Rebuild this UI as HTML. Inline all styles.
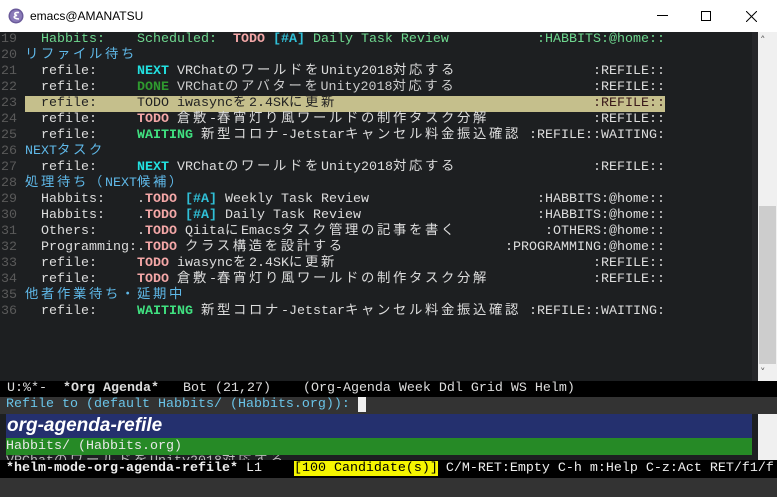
<!DOCTYPE html>
<html><head><meta charset="utf-8"><style>
*{margin:0;padding:0;box-sizing:border-box}
body{width:777px;height:497px;overflow:hidden;background:#1d1f21;font-family:"Liberation Mono","Noto Sans CJK JP",monospace;font-size:13.33px;position:relative}
.title{position:absolute;left:0;top:0;width:777px;height:32px;background:#fff;font-family:"Liberation Sans",sans-serif;font-size:12px;color:#000}
.ln{position:absolute;left:0;height:16px;line-height:16px;white-space:pre;color:#ddd;width:752px}
.ln .n{position:absolute;left:1px;width:22px;color:#5a5a5a}
.ln .t{position:absolute;left:25px}
.ln .g{position:absolute;right:87px}
.j{letter-spacing:2.67px}
.h{color:#5fb8e8}
.gr{color:#6fd88f}
.td{color:#f4a7a7;font-weight:bold}
.nx{color:#22e0e0;font-weight:bold}
.dn{color:#2f9a2f;font-weight:bold}
.wt{color:#40e080;font-weight:bold}
.pr{color:#30c0d8;font-weight:bold}
.bar{position:absolute;left:0;width:777px;height:16px;line-height:16px;white-space:pre}
</style></head><body>
<div class="title">
<svg style="position:absolute;left:8px;top:8px" width="16" height="16" viewBox="0 0 16 16"><circle cx="8" cy="8" r="7.5" fill="#6a5a9a"/><circle cx="8" cy="8" r="6" fill="#8a7ab8"/><path d="M11 4.5 C7 4 5 6 9 7.5 C5 8 5 10.5 11 11" stroke="#fff" stroke-width="1.6" fill="none"/></svg>
<span style="position:absolute;left:30px;top:9px">emacs@AMANATSU</span>
<div style="position:absolute;left:657px;top:15px;width:11px;height:1px;background:#000"></div>
<div style="position:absolute;left:701px;top:11px;width:10px;height:10px;border:1px solid #000"></div>
<svg style="position:absolute;left:746px;top:11px" width="11" height="11"><path d="M0 0L11 11M11 0L0 11" stroke="#000" stroke-width="1"/></svg>
</div>
<div style="position:absolute;left:752px;top:32px;width:6px;height:349px;background:#252629"></div>
<div style="position:absolute;left:758px;top:32px;width:19px;height:349px;background:#f0f0f0"></div>
<div style="position:absolute;left:759px;top:206px;width:17px;height:158px;background:#cdcdcd"></div>
<div style="position:absolute;left:760px;top:34px;font-size:11px;color:#606060;font-family:'DejaVu Sans'">˄</div>
<div style="position:absolute;left:760px;top:366px;font-size:11px;color:#606060;font-family:'DejaVu Sans'">˅</div>

<div class="ln" style="top:32px"><span class="n">19</span><span class="t"><span class="gr">  Habbits:    Scheduled:  </span><span class="td">TODO</span> <span class="pr">[#A]</span><span class="gr"> Daily Task Review</span></span><span class="g gr">:HABBITS:@home::</span></div>
<div class="ln" style="top:48px"><span class="n">20</span><span class="t h j">リファイル待ち</span></div>
<div class="ln" style="top:64px"><span class="n">21</span><span class="t">  refile:     <span class="nx">NEXT</span> VRChat<span class="j">のワールドを</span>Unity2018<span class="j">対応する</span></span><span class="g">:REFILE::</span></div>
<div class="ln" style="top:80px"><span class="n">22</span><span class="t">  refile:     <span class="dn">DONE</span> <span style="color:#ccc">VRChat<span class="j">のアバターを</span>Unity2018<span class="j">対応する</span></span></span><span class="g">:REFILE::</span></div>
<div class="ln" style="top:96px"><span class="n">23</span><div style="position:absolute;left:25px;width:640px;height:16px;background:#c5bf8c"></div><span class="t" style="color:#222">  refile:     TODO iwasync<span class="j">を</span>2.4SK<span class="j">に更新</span></span><span class="g" style="color:#3a1a1a">:REFILE::</span></div>
<div class="ln" style="top:112px"><span class="n">24</span><span class="t">  refile:     <span class="td">TODO</span> <span class="j">倉敷</span>-<span class="j">春宵灯り風ワールドの制作タスク分解</span></span><span class="g">:REFILE::</span></div>
<div class="ln" style="top:128px"><span class="n">25</span><span class="t">  refile:     <span class="wt">WAITING</span> <span class="j">新型コロナ</span>-Jetstar<span class="j">キャンセル料金振込確認</span></span><span class="g">:REFILE::WAITING:</span></div>
<div class="ln" style="top:144px"><span class="n">26</span><span class="t h">NEXT<span class="j">タスク</span></span></div>
<div class="ln" style="top:160px"><span class="n">27</span><span class="t">  refile:     <span class="nx">NEXT</span> VRChat<span class="j">のワールドを</span>Unity2018<span class="j">対応する</span></span><span class="g">:REFILE::</span></div>
<div class="ln" style="top:176px"><span class="n">28</span><span class="t h"><span class="j">処理待ち（</span>NEXT<span class="j">候補）</span></span></div>
<div class="ln" style="top:192px"><span class="n">29</span><span class="t">  Habbits:    .<span class="td">TODO</span> <span class="pr">[#A]</span> Weekly Task Review</span><span class="g">:HABBITS:@home::</span></div>
<div class="ln" style="top:208px"><span class="n">30</span><span class="t">  Habbits:    .<span class="td">TODO</span> <span class="pr">[#A]</span> Daily Task Review</span><span class="g">:HABBITS:@home::</span></div>
<div class="ln" style="top:224px"><span class="n">31</span><span class="t">  Others:     .<span class="td">TODO</span> Qiita<span class="j">に</span>Emacs<span class="j">タスク管理の記事を書く</span></span><span class="g">:OTHERS:@home::</span></div>
<div class="ln" style="top:240px"><span class="n">32</span><span class="t">  Programming:.<span class="td">TODO</span> <span class="j">クラス構造を設計する</span></span><span class="g">:PROGRAMMING:@home::</span></div>
<div class="ln" style="top:256px"><span class="n">33</span><span class="t">  refile:     <span class="td">TODO</span> iwasync<span class="j">を</span>2.4SK<span class="j">に更新</span></span><span class="g">:REFILE::</span></div>
<div class="ln" style="top:272px"><span class="n">34</span><span class="t">  refile:     <span class="td">TODO</span> <span class="j">倉敷</span>-<span class="j">春宵灯り風ワールドの制作タスク分解</span></span><span class="g">:REFILE::</span></div>
<div class="ln" style="top:288px"><span class="n">35</span><span class="t h j">他者作業待ち・延期中</span></div>
<div class="ln" style="top:304px"><span class="n">36</span><span class="t">  refile:     <span class="wt">WAITING</span> <span class="j">新型コロナ</span>-Jetstar<span class="j">キャンセル料金振込確認</span></span><span class="g">:REFILE::WAITING:</span></div>

<div class="bar" style="top:381px;background:#000;color:#ddd;height:16px;padding-left:7px">U:%*-  <b>*Org Agenda*</b>   Bot (21,27)    (Org-Agenda Week Ddl Grid WS Helm)</div>
<div class="bar" style="top:397px;background:#333;color:#6ac4e8;height:17px;padding-left:6px">Refile to (default Habbits/ (Habbits.org)): <span style="background:#f0f0f0"> </span></div>
<div style="position:absolute;left:0;top:414px;width:777px;height:46px;background:#1d1f21"></div>
<div style="position:absolute;left:6px;top:414px;width:746px;height:24px;background:#24306e;color:#fff;font-family:'Liberation Sans',sans-serif;font-weight:bold;font-style:italic;font-size:19px;line-height:24px;padding-left:1px">org-agenda-refile</div>
<div style="position:absolute;left:6px;top:438px;width:746px;height:17px;background:#268a26;color:#e8e8e8;line-height:17px;white-space:pre">Habbits/ (Habbits.org)</div>
<div style="position:absolute;left:6px;top:455px;width:746px;height:5px;overflow:hidden;color:#bbb;line-height:14px;white-space:pre">VRChat<span class="j">のワールドを</span>Unity2018<span class="j">対応する</span></div>
<div style="position:absolute;left:758px;top:414px;width:19px;height:46px;background:#f0f0f0"></div>
<div class="bar" style="top:460px;background:#000;color:#eee;height:18px;line-height:18px;padding-left:6px"><b>*helm-mode-org-agenda-refile*</b> L1    <span style="background:#f5f500;color:#000">[100 Candidate(s)]</span> C/M-RET:Empty C-h m:Help C-z:Act RET/f1/f</div>
<div style="position:absolute;left:0;top:478px;width:777px;height:19px;background:#333"></div>
</body></html>
